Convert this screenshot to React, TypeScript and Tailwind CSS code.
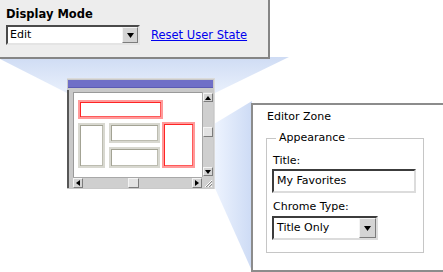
import React from "react";

const Down = ({ w = 7 }: { w?: number }) => (
  <svg width={w} height={Math.ceil(w / 2) + 1} viewBox={`0 0 ${w} ${Math.ceil(w / 2) + 1}`}>
    <path d={`M0 0H${w}L${w / 2} ${Math.ceil(w / 2) + 1}Z`} fill="#000" />
  </svg>
);

const Tri = ({ dir }: { dir: "up" | "down" | "left" | "right" }) => {
  const d = {
    up: "M0 4H6L3 0Z",
    down: "M0 0H6L3 4Z",
    left: "M4 0V6L0 3Z",
    right: "M0 0V6L4 3Z",
  }[dir];
  const horiz = dir === "left" || dir === "right";
  return (
    <svg width={horiz ? 4 : 6} height={horiz ? 6 : 4}>
      <path d={d} fill="#000" />
    </svg>
  );
};

const Btn = ({ children, className = "" }: { children?: React.ReactNode; className?: string }) => (
  <div
    className={`flex items-center justify-center bg-[#d4d4d4] border border-t-[#f4f4f4] border-l-[#f4f4f4] border-b-[#7c7c7c] border-r-[#7c7c7c] ${className}`}
  >
    {children}
  </div>
);

const RedBox = ({ className = "" }: { className?: string }) => (
  <div className={`bg-white border-2 border-[#ff9a9a] shadow-[inset_1px_1px_0_#ff2424,inset_-1px_-1px_0_#ff5a5a] ${className}`} />
);

const GrayBox = ({ className = "" }: { className?: string }) => (
  <div className={`bg-white border-2 border-[#d8d8d0] shadow-[inset_1px_1px_0_#a3a394,inset_-1px_-1px_0_#bcbcb0] ${className}`} />
);

export default function App() {
  return (
    <div className="relative w-[443px] h-[272px] bg-white overflow-hidden font-['DejaVu_Sans',Verdana,sans-serif] text-[11px] text-black">
      {/* beams */}
      <svg className="absolute inset-0" width="443" height="272">
        <defs>
          <linearGradient id="b1" x1="0" y1="0" x2="0" y2="1">
            <stop offset="0" stopColor="#cfdcf4" />
            <stop offset="1" stopColor="#e9f0fc" />
          </linearGradient>
          <linearGradient id="b2" x1="0" y1="0" x2="1" y2="0">
            <stop offset="0" stopColor="#eef4fe" />
            <stop offset="1" stopColor="#cddbf5" />
          </linearGradient>
        </defs>
        <polygon points="-4,57 289,57 215,93 67,93" fill="url(#b1)" />
        <polygon points="214,124 252,101 252,271 214,186" fill="url(#b2)" />
      </svg>

      {/* display mode panel */}
      <div className="absolute left-0 top-0 w-[270px] h-[59px] bg-[#ededed] border-r-2 border-b-2 border-[#858585] px-[6px] pt-[7px]">
        <div className="font-bold text-[11.5px] leading-[14px]">Display Mode</div>
        <div className="flex items-center mt-[4px]">
          <div className="flex w-[134px] h-[20px] bg-white border-2 border-t-[#4a4a4a] border-l-[#4a4a4a] border-b-[#e4e4e4] border-r-[#e4e4e4]">
            <div className="flex-1 pl-[2px] leading-[16px]">Edit</div>
            <Btn className="w-[16px] h-[16px]">
              <Down />
            </Btn>
          </div>
          <a className="ml-[11px] text-[11.5px] text-[#0000ee] underline leading-[14px] cursor-pointer">Reset User State</a>
        </div>
      </div>

      {/* page window */}
      <div className="absolute left-[67px] top-[78px] w-[148px] h-[111px] bg-[#c9c9c9] border-t border-r border-[#dadada] pt-[1px]">
        <div className="mx-[1px] h-[8px] bg-[#6f6fc7] border-b border-[#5b5bb4]" />
        <div className="flex mt-[1px]">
          <div className="w-[2px] mt-[1px] bg-[#575757] self-stretch" />
          <div className="pl-[4px] pt-[3px] flex flex-col">
            <div className="flex">
              <div className="w-[129px] h-[85px] bg-white border-t border-l border-[#9a9a9a] pl-[4px] pt-[7px]">
                <RedBox className="w-[85px] h-[19px]" />
                <div className="flex items-start mt-[4px]">
                  <GrayBox className="w-[27px] h-[45px]" />
                  <div className="flex flex-col gap-[4px] ml-[4px]">
                    <GrayBox className="w-[51px] h-[20px]" />
                    <GrayBox className="w-[51px] h-[21px]" />
                  </div>
                  <RedBox className="w-[33px] h-[46px] ml-[2px] -mt-[1px]" />
                </div>
              </div>
              <div className="w-[11px] h-[85px] bg-[#cfcfcf] border-l border-[#a8a8a8] flex flex-col">
                <Btn className="h-[9px] mt-[1px]">
                  <Tri dir="up" />
                </Btn>
                <Btn className="h-[10px] mt-[25px] bg-[#e2e2e2]" />
                <div className="flex-1" />
                <Btn className="h-[9px] mb-[1px]">
                  <Tri dir="down" />
                </Btn>
              </div>
            </div>
            <div className="flex">
              <div className="w-[129px] h-[11px] bg-[#cfcfcf] border-t border-[#a8a8a8] flex items-stretch">
                <Btn className="w-[10px]">
                  <Tri dir="left" />
                </Btn>
                <Btn className="w-[11px] ml-[45px] bg-[#e2e2e2]" />
                <div className="flex-1" />
                <Btn className="w-[10px]">
                  <Tri dir="right" />
                </Btn>
              </div>
              <div className="w-[11px] h-[11px] bg-[#cfcfcf]">
                <svg width="11" height="11">
                  <path d="M10 3L3 10M10 6L6 10M10 9L9 10" stroke="#ffffff" strokeWidth="1" />
                  <path d="M10 4L4 10M10 7L7 10" stroke="#8a8a8a" strokeWidth="1" />
                </svg>
              </div>
            </div>
          </div>
        </div>
      </div>

      {/* editor zone */}
      <div className="absolute left-[251px] top-[103px] w-[200px] h-[169px] bg-white border-2 border-[#8c8c8c] pt-[5px] pl-[14px]">
        <div className="leading-[14px]">Editor Zone</div>
        <fieldset className="mt-[7px] w-[158px] border border-[#c6c6c6] pl-[5px] pr-[6px] pb-[12px] -ml-[1px]">
          <legend className="ml-[4px] px-[3px] leading-[14px]">Appearance</legend>
          <div className="leading-[14px] mt-[9px] ml-[1px]">Title:</div>
          <div className="mt-[1px] w-[144px] h-[24px] border-2 border-t-[#3c3c3c] border-l-[#3c3c3c] border-b-[#dcdcdc] border-r-[#dcdcdc] pl-[3px] leading-[20px]">
            My Favorites
          </div>
          <div className="leading-[14px] mt-[7px] ml-[1px]">Chrome Type:</div>
          <div className="mt-[2px] flex w-[106px] h-[24px] border-2 border-t-[#3c3c3c] border-l-[#3c3c3c] border-b-[#dcdcdc] border-r-[#dcdcdc]">
            <div className="flex-1 pl-[3px] leading-[20px]">Title Only</div>
            <Btn className="w-[17px] h-[20px]">
              <Down />
            </Btn>
          </div>
        </fieldset>
      </div>
    </div>
  );
}
